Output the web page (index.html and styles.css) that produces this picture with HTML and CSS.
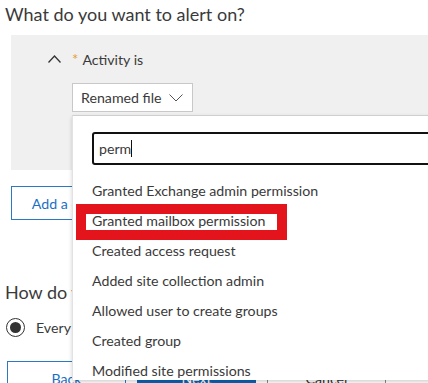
FILE: index.html
```html
<!DOCTYPE html>
<html>
<head>
<meta charset="utf-8">
<link rel="stylesheet" href="styles.css">
</head>
<body>
<div class="page">
  <h2 class="heading">What do you want to alert on?</h2>
  <div class="panel">
    <div class="cond-row">
      <svg class="chev-up" width="13" height="8" viewBox="0 0 13 8"><path d="M0.5 7.5 L6.5 1 L12.5 7.5" fill="none" stroke="#333" stroke-width="1.3"/></svg>
      <span class="req">*</span>
      <span class="cond-label">Activity is</span>
    </div>
    <div class="select">
      <span>Renamed file</span>
      <svg class="chev-down" width="14" height="8" viewBox="0 0 14 8"><path d="M0.5 0.5 L7 7 L13.5 0.5" fill="none" stroke="#555" stroke-width="1"/></svg>
    </div>
  </div>
  <div class="add-row"><button class="btn btn-outline">Add a condition</button></div>
  <h2 class="heading how">How do you want to be alerted?</h2>
  <label class="radio">
    <span class="radio-circle"><span class="radio-dot"></span></span>
    <span>Every time an activity matches the rule</span>
  </label>
  <div class="actions">
    <button class="btn btn-outline">Back</button>
    <button class="btn btn-primary">Next</button>
    <button class="btn btn-default">Cancel</button>
  </div>

  <div class="dropdown">
    <div class="search"><span class="search-text">perm</span><span class="caret"></span></div>
    <ul class="options">
      <li>Granted Exchange admin permission</li>
      <li class="marked">Granted mailbox permission</li>
      <li>Created access request</li>
      <li>Added site collection admin</li>
      <li>Allowed user to create groups</li>
      <li>Created group</li>
      <li>Modified site permissions</li>
    </ul>
  </div>
</div>
</body>
</html>
```
FILE: styles.css
```css
* { box-sizing: border-box; }
html, body { margin: 0; padding: 0; background: #fff; }
body {
  width: 428px;
  height: 383px;
  overflow: hidden;
  font-family: "Lato", "Noto Sans", sans-serif;
  color: #333;
}
.page {
  position: relative;
  width: 428px;
  height: 383px;
  overflow: hidden;
}
.heading {
  margin: 0;
  padding: 2px 0 0 5px;
  font-size: 18px;
  font-weight: 400;
  line-height: 24px;
  color: #3a3a3a;
  white-space: nowrap;
}
.panel {
  margin: 9px 0 0 11px;
  height: 135px;
  background: #f0f0f0;
  padding: 12px 0 0 0;
}
.cond-row {
  display: flex;
  align-items: center;
  height: 24px;
  padding-left: 37px;
}
.chev-up { margin-right: 11px; }
.req { color: #e3a03a; font-size: 15px; margin-right: 4px; line-height: 1; }
.cond-label { font-size: 14.2px; color: #3a3a3a; }
.select {
  margin: 12px 0 0 61px;
  width: 121px;
  height: 29px;
  background: #fff;
  border: 1px solid #c8c8c8;
  display: flex;
  align-items: center;
  padding-left: 8px;
  font-size: 14.2px;
  color: #3a3a3a;
}
.chev-down { margin-left: 7px; }
.add-row { padding: 16px 0 0 11px; }
.btn {
  font-family: inherit;
  font-size: 14.2px;
  height: 34px;
  background: #fff;
  padding: 0;
  margin: 0;
}
.add-row .btn { width: 140px; }
.btn-outline { border: 1px solid #2b79c2; color: #1a6fc4; }
.btn-primary { border: 1px solid #0a64b4; background: #0a64b4; color: #fff; }
.btn-default { border: 1px solid #888; color: #333; }
.how { padding-top: 0; margin-top: 60px; }
.radio {
  display: flex;
  align-items: center;
  margin: 14px 0 0 6px;
  font-size: 14.2px;
  white-space: nowrap;
  color: #3a3a3a;
}
.radio-circle {
  width: 19px; height: 19px;
  border: 1.5px solid #333;
  border-radius: 50%;
  display: flex; align-items: center; justify-content: center;
  margin-right: 11px;
}
.radio-dot { width: 11px; height: 11px; border-radius: 50%; background: #333; }
.actions {
  display: flex;
  gap: 11px;
  margin: 24px 0 0 7px;
}
.actions .btn { width: 119px; height: 34px; }

.dropdown {
  position: absolute;
  left: 72px;
  top: 115px;
  width: 380px;
  height: 265px;
  background: #fff;
  border-top: 1px solid #cfcfcf;
  border-left: 1px solid #e2e2e2;
  box-shadow: 0 2px 4px rgba(0,0,0,0.18);
  padding: 16px 0 0 19px;
}
.search {
  height: 33px;
  border: 2.5px solid #111;
  border-radius: 3px;
  display: flex;
  align-items: center;
  padding-left: 5px;
  font-size: 14.2px;
  color: #3a3a3a;
}
.caret { width: 1px; height: 17px; background: #111; margin-left: 0; }
.options {
  list-style: none;
  margin: 11px 0 0 0;
  padding: 0;
}
.options li {
  position: relative;
  height: 30px;
  line-height: 30px;
  font-size: 14.2px;
  color: #3a3a3a;
  white-space: nowrap;
}
.options li.marked::before {
  content: "";
  position: absolute;
  left: -16px;
  top: -2px;
  width: 211px;
  height: 36px;
  border: 10px solid #e3141c;
  box-sizing: border-box;
}
```
